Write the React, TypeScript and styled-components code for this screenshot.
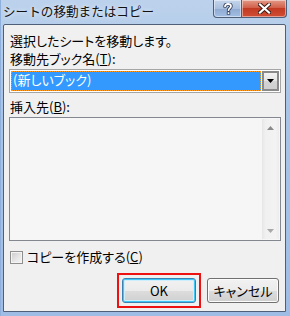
import React from "react";
import styled, { createGlobalStyle } from "styled-components";

const Global = createGlobalStyle`
  html, body { margin: 0; padding: 0; background: #fff; }
  * { box-sizing: border-box; }
`;

const FONT = `"Noto Sans CJK JP", "Noto Sans", sans-serif`;

const Window = styled.div`
  width: 290px;
  height: 316px;
  display: flex;
  flex-direction: column;
  background: linear-gradient(180deg, #bcd2ec 0%, #a9c4e6 30%, #9fbde4 100%);
  border-left: 1px solid #8fb0dc;
  font-family: ${FONT};
  overflow: hidden;
`;

const TitleBar = styled.div`
  height: 24px;
  display: flex;
  align-items: flex-start;
  flex: none;
`;

const Title = styled.div`
  padding: 3px 0 0 2px;
  font-size: 12.6px;
  line-height: 16px;
  color: #111;
  text-shadow: 0 0 4px rgba(255,255,255,0.9);
`;

const Captions = styled.div`
  margin-left: auto;
  margin-right: 3px;
  display: flex;
`;

const CapButton = styled.div<{ $kind: "help" | "close" }>`
  width: ${p => (p.$kind === "help" ? 29 : 45)}px;
  height: 18px;
  display: flex;
  align-items: center;
  justify-content: center;
  border: 1px solid #4d5e78;
  border-top: none;
  border-left: ${p => (p.$kind === "close" ? "none" : "1px solid #4d5e78")};
  border-radius: ${p => (p.$kind === "help" ? "0 0 0 4px" : "0 0 4px 0")};
  background: ${p =>
    p.$kind === "help"
      ? "linear-gradient(180deg, #c5d6ec 0%, #a9bfdd 50%, #8eaad2 51%, #a4bfe3 100%)"
      : "linear-gradient(180deg, #e39a88 0%, #d2604a 45%, #c23a22 50%, #d04e34 100%)"};
  box-shadow: inset 0 0 0 1px rgba(255,255,255,0.45);
`;

const Client = styled.div`
  flex: 1;
  margin: 0 4px 4px 2px;
  border: 1px solid #4f5f7a;
  border-radius: 2px 2px 0 0;
  background: #f0f0f0;
  display: flex;
  flex-direction: column;
  padding: 8px 4px 3px 5px;
`;

const Text = styled.div<{ $mt?: number }>`
  font-size: 13px;
  line-height: 16px;
  color: #000;
  font-feature-settings: "palt" 1;
  margin-top: ${p => p.$mt ?? 0}px;
  padding-left: 1px;
  white-space: nowrap;
`;

const Combo = styled.div`
  margin-top: 2px;
  height: 24px;
  border: 1px solid #a5a5a5;
  background: #fff;
  display: flex;
  align-items: stretch;
  padding: 1px;
`;

const ComboValue = styled.div`
  flex: 1;
  margin-right: 1px;
  background: #3399ff;
  color: #fff;
  font-size: 13px;
  line-height: 18px;
  padding-left: 2px;
  outline: 1px dotted #ff9a1a;
  outline-offset: -1px;
  font-feature-settings: "palt" 1;
`;

const ComboButton = styled.div`
  width: 17px;
  border: 2px solid #8a8a8a;
  background: linear-gradient(180deg, #f2f2f2 0%, #e6e6e6 50%, #d4d4d4 51%, #cfcfcf 100%);
  display: flex;
  align-items: center;
  justify-content: center;
`;

const ListBox = styled.div`
  margin-top: 2px;
  height: 124px;
  border: 1px solid #828790;
  background: #f6f6f6;
  display: flex;
  justify-content: flex-end;
`;

const ScrollBar = styled.div`
  width: 17px;
  margin: 1px 1px 1px 0;
  background: linear-gradient(90deg, #e6e6e6 0%, #f0f0f0 20%, #f3f3f3 80%, #ececec 100%);
  display: flex;
  flex-direction: column;
  justify-content: space-between;
  align-items: center;
  padding: 7px 0 6px;
`;

const CheckRow = styled.div`
  margin-top: 8px;
  display: flex;
  align-items: center;
  gap: 3px;
`;

const CheckBox = styled.div`
  width: 13px;
  height: 13px;
  margin-left: 1px;
  border: 1px solid #8f8f8f;
  background: linear-gradient(135deg, #cbcbcb 0%, #e8e8e8 60%, #f4f4f4 100%);
  box-shadow: inset 0 0 0 1px #f4f4f4;
`;

const Buttons = styled.div`
  margin-top: auto;
  display: flex;
  justify-content: flex-end;
  align-items: center;
  gap: 6px;
  padding-right: 2px;
`;

const FocusMark = styled.div`
  border: 2px solid #ee1111;
  padding: 3px 3px;
  display: flex;
`;

const Button = styled.div<{ $w: number }>`
  width: ${p => p.$w}px;
  height: 25px;
  border: 1px solid #707070;
  border-radius: 3px;
  background: linear-gradient(180deg, #f2f2f2 0%, #ebebeb 50%, #dddddd 51%, #cfcfcf 100%);
  box-shadow: inset 0 0 0 1px #fcfcfc;
  display: flex;
  align-items: center;
  justify-content: center;
  font-size: 13px;
  line-height: 16px;
  color: #000;
  font-feature-settings: "palt" 1;
`;

const OkButton = styled(Button)`
  border-color: #3c7fb1;
  box-shadow: inset 0 0 0 1px #3fc8f6, inset 0 0 0 2px #cdeefc;
`;

export default function App() {
  return (
    <>
      <Global />
      <Window>
        <TitleBar>
          <Title>シートの移動またはコピー</Title>
          <Captions>
            <CapButton $kind="help">
              <svg width="10" height="12" viewBox="0 0 10 12">
                <path d="M2 3.5 C2 1.5 3.5 1 5 1 C7 1 8 2 8 3.3 C8 5 5.5 5.2 5.5 7.2" fill="none" stroke="#2a3550" strokeWidth="3.4" strokeLinecap="round" />
                <rect x="3.8" y="8.6" width="3.4" height="3" fill="#2a3550" />
                <path d="M2 3.5 C2 1.5 3.5 1 5 1 C7 1 8 2 8 3.3 C8 5 5.5 5.2 5.5 7.2" fill="none" stroke="#fff" strokeWidth="1.8" strokeLinecap="round" />
                <rect x="4.6" y="9.2" width="1.8" height="1.8" fill="#fff" />
              </svg>
            </CapButton>
            <CapButton $kind="close">
              <svg width="13" height="11" viewBox="0 0 13 11">
                <path d="M2 1.5 L11 9.5 M11 1.5 L2 9.5" stroke="#3a1a14" strokeWidth="4" strokeLinecap="square" />
                <path d="M2 1.5 L11 9.5 M11 1.5 L2 9.5" stroke="#fff" strokeWidth="2.2" strokeLinecap="square" />
              </svg>
            </CapButton>
          </Captions>
        </TitleBar>
        <Client>
          <Text>選択したシートを移動します。</Text>
          <Text $mt={2}>移動先ブック名(<u>T</u>):</Text>
          <Combo>
            <ComboValue>(新しいブック)</ComboValue>
            <ComboButton>
              <svg width="7" height="4" viewBox="0 0 7 4">
                <path d="M0 0 H7 L3.5 4 Z" fill="#000" />
              </svg>
            </ComboButton>
          </Combo>
          <Text $mt={6}>挿入先(<u>B</u>):</Text>
          <ListBox>
            <ScrollBar>
              <svg width="7" height="4" viewBox="0 0 7 4">
                <path d="M0 4 H7 L3.5 0 Z" fill="#8a8a8a" />
              </svg>
              <svg width="7" height="4" viewBox="0 0 7 4">
                <path d="M0 0 H7 L3.5 4 Z" fill="#a8a8a8" />
              </svg>
            </ScrollBar>
          </ListBox>
          <CheckRow>
            <CheckBox />
            <Text>コピーを作成する(<u>C</u>)</Text>
          </CheckRow>
          <Buttons>
            <FocusMark>
              <OkButton $w={74}>OK</OkButton>
            </FocusMark>
            <Button $w={72}>キャンセル</Button>
          </Buttons>
        </Client>
      </Window>
    </>
  );
}
